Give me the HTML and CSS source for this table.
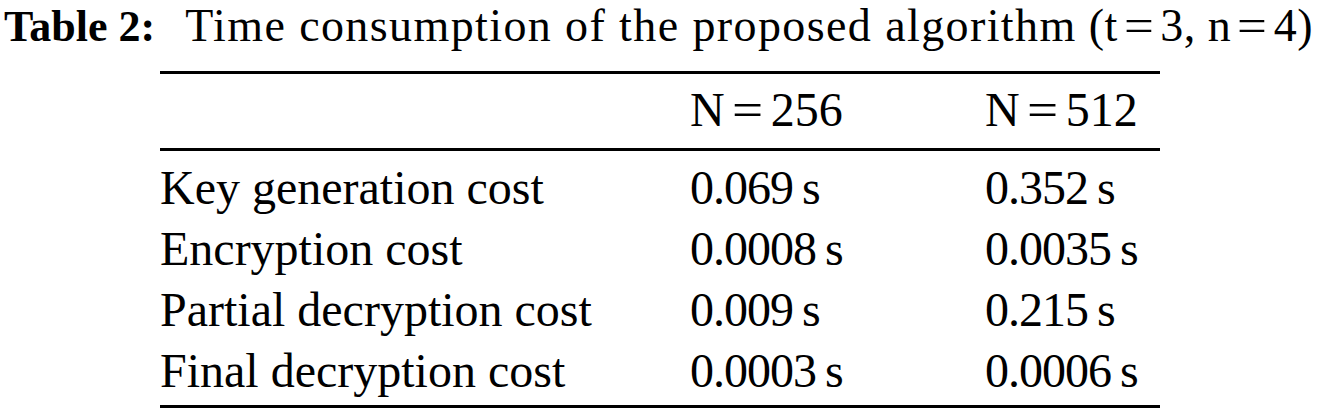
FILE: index.html
```html
<!DOCTYPE html>
<html lang="en">
<head>
    <meta charset="UTF-8">
    <meta name="viewport" content="width=device-width, initial-scale=1.0">
    <title>Table 2</title>
    <link rel="stylesheet" href="styles.css">
</head>
<body>
    <div class="figure">
        <p class="caption"><b>Table 2:</b><span class="caption-text">Time consumption of the proposed algorithm</span><span class="caption-params">(t<span class="eq">=</span>3, n<span class="eq">=</span>4)</span></p>
        <table class="results">
            <thead>
                <tr>
                    <th></th>
                    <th>N<span class="eq">=</span>256</th>
                    <th>N<span class="eq">=</span>512</th>
                </tr>
            </thead>
            <tbody>
                <tr>
                    <td>Key generation cost</td>
                    <td class="value">0.069<span class="unit">s</span></td>
                    <td class="value">0.352<span class="unit">s</span></td>
                </tr>
                <tr>
                    <td>Encryption cost</td>
                    <td class="value">0.0008<span class="unit">s</span></td>
                    <td class="value">0.0035<span class="unit">s</span></td>
                </tr>
                <tr>
                    <td>Partial decryption cost</td>
                    <td class="value">0.009<span class="unit">s</span></td>
                    <td class="value">0.215<span class="unit">s</span></td>
                </tr>
                <tr>
                    <td>Final decryption cost</td>
                    <td class="value">0.0003<span class="unit">s</span></td>
                    <td class="value">0.0006<span class="unit">s</span></td>
                </tr>
            </tbody>
        </table>
    </div>
</body>
</html>
```

FILE: styles.css
```css
body {
    margin: 0;
    background: #ffffff;
    color: #000000;
    font-family: "Liberation Serif", "Times New Roman", serif;
}

.figure {
    width: 1325px;
}

.caption {
    margin: 0;
    padding-left: 4px;
    font-size: 46px;
    line-height: 51px;
    white-space: nowrap;
}

.caption b {
    font-size: 44px;
}

.caption-text {
    margin-left: 30px;
    letter-spacing: 1.4px;
}

.caption-params {
    margin-left: 12px;
    letter-spacing: 0.5px;
}

.caption .eq {
    margin: 0 8px;
}

.eq {
    display: inline-block;
    margin: 0 10px 0 9px;
    transform: scaleX(1.15);
}

.results .value {
    letter-spacing: -1px;
}

.unit {
    margin-left: 9px;
}

.results {
    margin: 19px 0 0 160px;
    width: 1000px;
    table-layout: fixed;
    border-spacing: 0;
    font-size: 48px;
    line-height: 61px;
    border-top: 3px solid #000;
    border-bottom: 3px solid #000;
}

.results th,
.results td {
    text-align: left;
    font-weight: normal;
    padding: 0;
    white-space: nowrap;
}

.results thead th {
    padding: 5px 0 8px;
    border-bottom: 3px solid #000;
}

.results tbody tr:first-child td {
    padding-top: 6px;
}

.results tbody tr:last-child td {
    padding-bottom: 4px;
}

.results th:nth-child(1) { width: 530px; }
.results th:nth-child(2) { width: 295px; }
```
